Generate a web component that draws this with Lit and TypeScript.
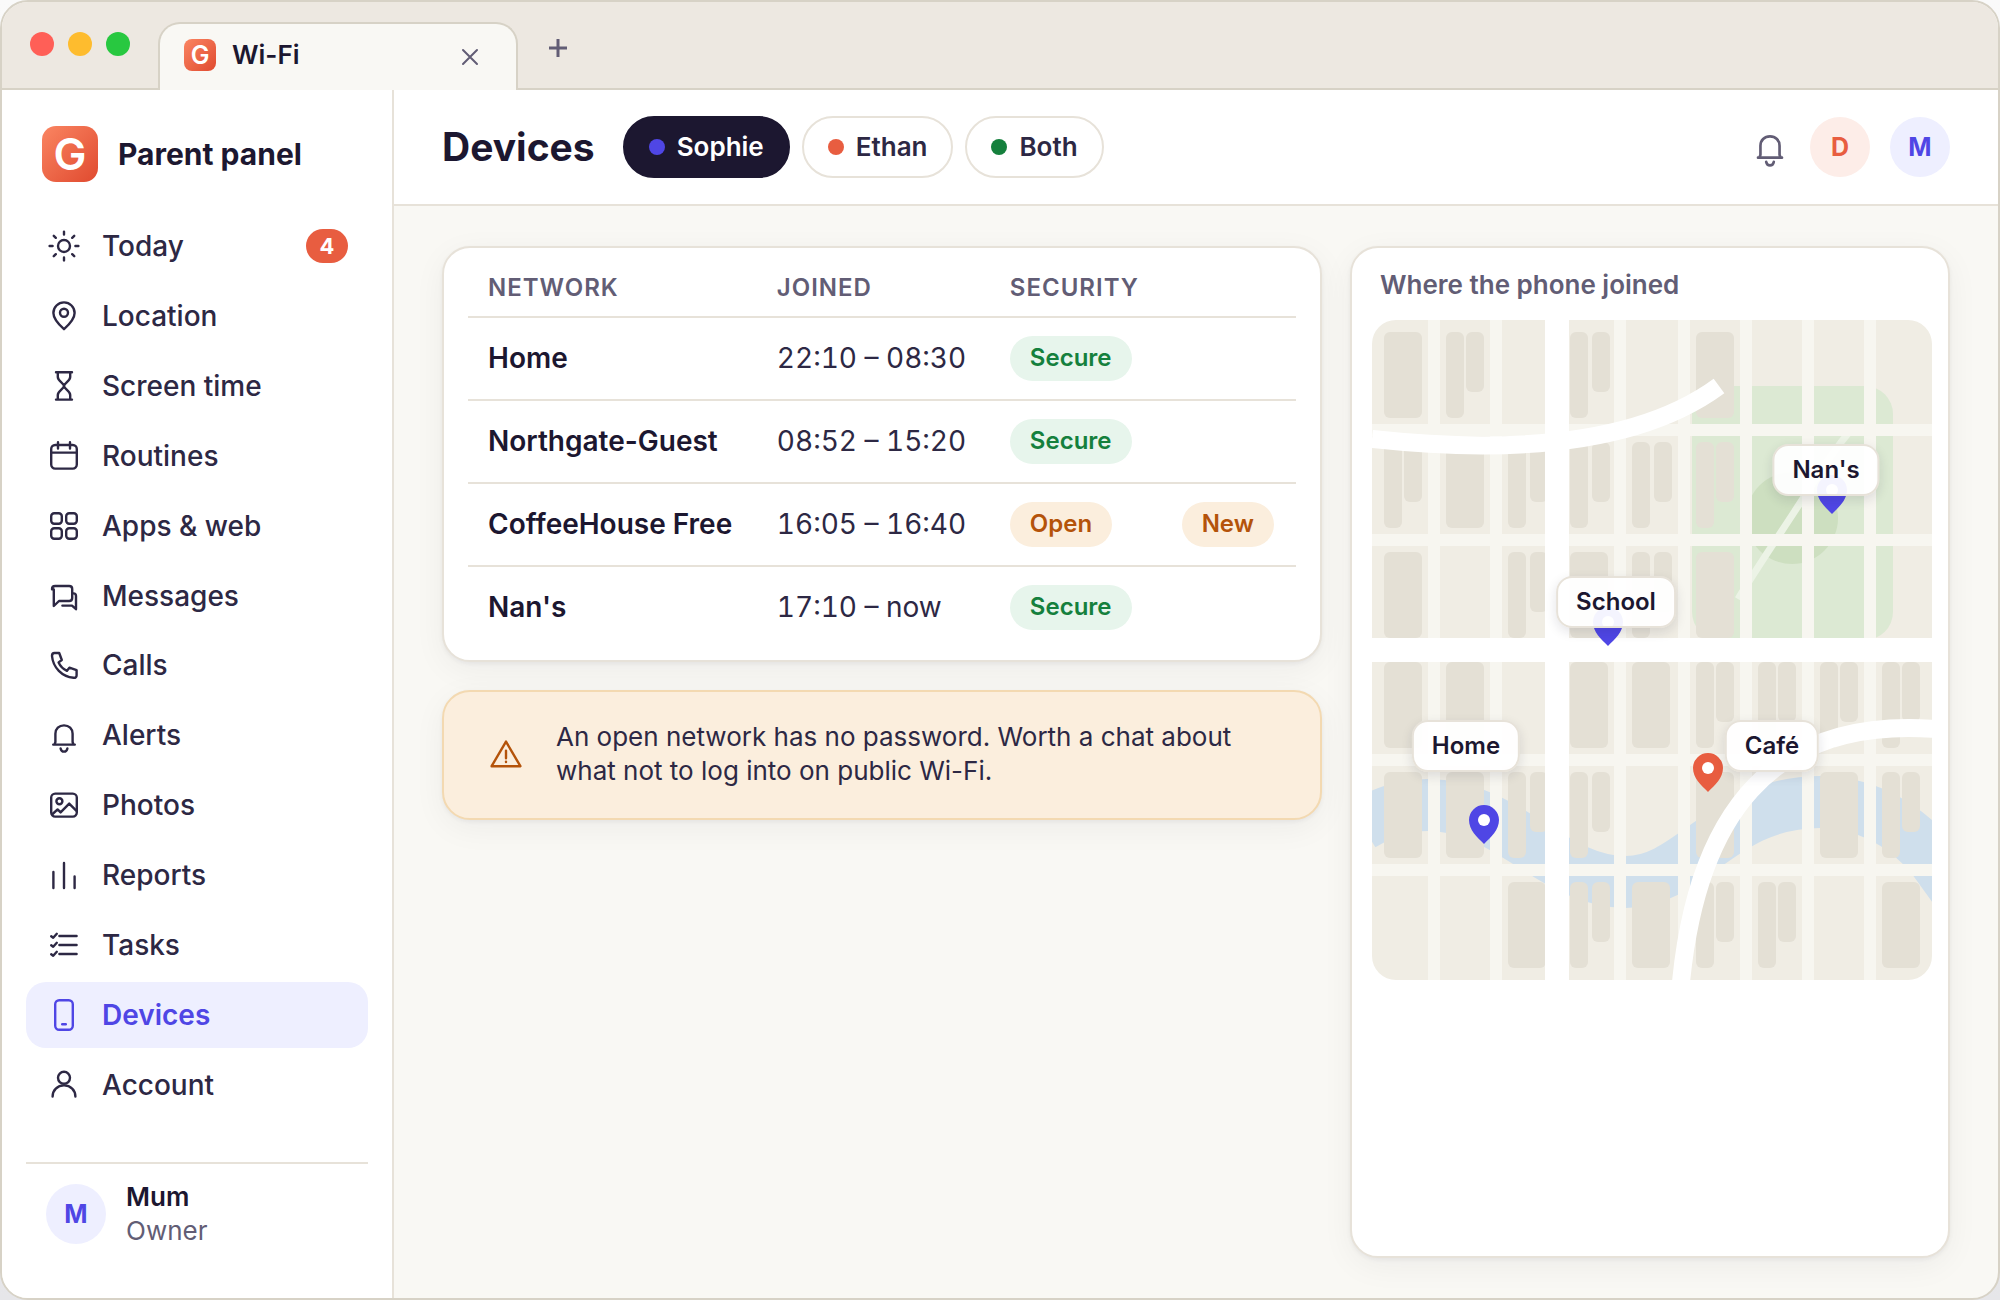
import { LitElement, html, css, svg, nothing, type TemplateResult } from "lit";
import { customElement } from "lit/decorators.js";
import { classMap } from "lit/directives/class-map.js";

const icons: Record<string, TemplateResult> = {
  sun: svg`<circle cx="18" cy="18" r="6"/><path d="M18 3.6v3M18 29.4v3M3.6 18h3M29.4 18h3M7.8 7.8l2 2M26.2 26.2l2 2M7.8 28.2l2-2M26.2 9.8l2-2"/>`,
  pin: svg`<path d="M18 31.2c-6-5.400-10.600-10.600-10.600-16.200a10.600 10.600 0 0 1 21.200 0c0 5.600-4.600 10.800-10.600 16.200z"/><circle cx="18" cy="14.800" r="4"/>`,
  hourglass: svg`<path d="M10 4.200h16M10 31.600h16M11.800 4.200v4.800c0 4 6.200 6.200 6.200 9s-6.200 5-6.200 9v4.600M24.200 4.200v4.800c0 4-6.200 6.200-6.200 9s6.200 5 6.200 9v4.600"/>`,
  calendar: svg`<rect x="5.200" y="7" width="25.600" height="23.600" rx="4"/><path d="M5.200 14.600h25.600M12 4.200v6.400M24 4.200v6.400"/>`,
  grid: svg`<rect x="5.200" y="5.200" width="10.600" height="10.600" rx="3"/><rect x="20.200" y="5.200" width="10.600" height="10.600" rx="3"/><rect x="5.200" y="20.200" width="10.600" height="10.600" rx="3"/><rect x="20.200" y="20.200" width="10.600" height="10.600" rx="3"/>`,
  chat: svg`<path d="M6 11.200c0-2 1.400-3.200 3.200-3.200h14c1.800 0 3 1.200 3 3v9c0 1.800-1.200 3-3 3H13l-5.200 5V11.400"/><path d="M26.400 15.400h1c1.600 0 2.600 1 2.600 2.600v13.200l-4-3.600h-9.600"/>`,
  phone: svg`<path d="M8.400 6h4.800l2.600 7-3.200 2.400c1.800 4 4.200 6.400 8.400 8.400l2.400-3.200 7.200 2.600v5c0 1.800-1.200 2.800-3 2.600C16 29.600 7 20.600 6 9c0-1.800.8-3 2.400-3z"/>`,
  bell: svg`<path d="M7.200 27.600h21.600M8.600 27.400l.8-2.400v-8.200c0-5 3.600-8.400 8.600-8.400s8.600 3.400 8.600 8.400v8.200l.8 2.400M14.600 31.400c.4 2 1.600 3.200 3.400 3.200s3-1.200 3.400-3.200"/>`,
  photo: svg`<rect x="5.200" y="6.600" width="25.600" height="23" rx="4"/><circle cx="13.400" cy="14.200" r="3"/><path d="M6.600 27l5-4.600 3 3 8.600-8.800 7 7"/>`,
  bars: svg`<path d="M7.400 15v16M18 6v25M28.600 19.400v11.600"/>`,
  tasks: svg`<path d="M13.400 9h17.200M13.400 18h17.200M13.400 27h17.200M5.200 9.200l2 1.600 3.600-4M5.200 18.200l2 1.600 3.600-4M5.200 27.200l2 1.600 3.600-4"/>`,
  device: svg`<rect x="9.200" y="3.200" width="17.600" height="29.600" rx="4"/><path d="M16.200 27.200h3.600"/>`,
  user: svg`<circle cx="18" cy="10.800" r="6"/><path d="M6.600 29.600c0-6.600 4.800-11.200 11.400-11.200s11.400 4.600 11.400 11.200"/>`,
  warning: svg`<path d="M18 5.600L32.400 30.200H3.600zM18 14.600v7.600M18 25.600v.4"/>`,
};

const icon = (name: string) =>
  html`<svg class="icon" viewBox="0 0 36 36" aria-hidden="true">${icons[name]}</svg>`;

const NAV: { label: string; icon: string; badge?: number }[] = [
  { label: "Today", icon: "sun", badge: 4 },
  { label: "Location", icon: "pin" },
  { label: "Screen time", icon: "hourglass" },
  { label: "Routines", icon: "calendar" },
  { label: "Apps & web", icon: "grid" },
  { label: "Messages", icon: "chat" },
  { label: "Calls", icon: "phone" },
  { label: "Alerts", icon: "bell" },
  { label: "Photos", icon: "photo" },
  { label: "Reports", icon: "bars" },
  { label: "Tasks", icon: "tasks" },
  { label: "Devices", icon: "device" },
  { label: "Account", icon: "user" },
];

const NETWORKS = [
  { name: "Home", joined: "22:10 – 08:30", secure: true, fresh: false },
  { name: "Northgate-Guest", joined: "08:52 – 15:20", secure: true, fresh: false },
  { name: "CoffeeHouse Free", joined: "16:05 – 16:40", secure: false, fresh: true },
  { name: "Nan's", joined: "17:10 – now", secure: true, fresh: false },
];

const base = css`
  *, *::before, *::after { box-sizing: border-box; }
  .icon {
    display: block;
    flex: none;
    width: 36px;
    height: 36px;
    fill: none;
    stroke: currentColor;
    stroke-width: 2.4;
    stroke-linecap: round;
    stroke-linejoin: round;
  }
  .avatar {
    display: grid;
    place-items: center;
    flex: none;
    width: 60px;
    height: 60px;
    padding: 0;
    border: 0;
    border-radius: 50%;
    background: #eeefff;
    color: #4f46e5;
    font: 700 25px/34px "Inter", sans-serif;
  }
  .avatar.coral { background: #fdede8; color: #e85d40; }
`;

/* Map geometry, in a 560 x 660 plan of nine columns by six rows. */
const MAP_W = 560;
const MAP_H = 660;
const COLUMN_X = [12, 74, 136, 198, 260, 324, 386, 448, 510];
const SECOND_X = [20, 20, 22, 22, 22, 20, 20, 20, 20];
/* s = one large building, p = a pair, . = open ground */
const BLOCKS = ["sp.p.s...", "pspppp...", "s.psps...", "ss.sspppp", "sspp.s.sp", "..spspp.s"];
const PLACES = [
  { name: "Nan's", x: 454, y: 150, pinX: 460, pinY: 194, tone: "indigo" },
  { name: "School", x: 244, y: 282, pinX: 236, pinY: 326, tone: "indigo" },
  { name: "Home", x: 94, y: 426, pinX: 112, pinY: 524, tone: "indigo" },
  { name: "Café", x: 400, y: 426, pinX: 336, pinY: 472, tone: "coral" },
];

@customElement("join-map")
export class JoinMap extends LitElement {
  static styles = [base, css`
    :host {
      display: block;
      position: relative;
      overflow: hidden;
      border-radius: 24px;
      background: #f0ede4;
    }
    .plan { display: block; width: 100%; height: auto; }
    .park { fill: #dce9d3; }
    .grove { fill: #cddfc0; }
    .path { fill: none; stroke: #ecf3e6; stroke-width: 7; }
    .river { fill: none; stroke: #cfdfec; stroke-width: 52; }
    .building { fill: #e4e0d5; }
    .street { fill: none; stroke: #f7f6f0; stroke-width: 12; }
    .road { fill: none; stroke: #fff; stroke-width: 24; }
    .bend { fill: none; stroke: #fff; stroke-width: 18; }
    .indigo { fill: #4f46e5; }
    .coral { fill: #e85d40; }
    .hole { fill: #fff; }
    .label {
      position: absolute;
      transform: translate(-50%, -50%);
      padding: 8px 18px;
      border: 2px solid #e7e2d9;
      border-radius: 16px;
      background: rgba(255, 255, 255, 0.94);
      box-shadow: 0 4px 12px rgba(28, 23, 48, 0.12);
      color: #1c1730;
      font: 600 24px/32px "Inter", sans-serif;
      white-space: nowrap;
    }
  `];

  private block(kind: string, col: number, row: number) {
    const x = COLUMN_X[col];
    const y = row * 110 + 12;
    if (kind === "s") return svg`<rect class="building" x=${x} y=${y} width="38" height="86" rx="6"/>`;
    if (kind === "p")
      return svg`<rect class="building" x=${x} y=${y} width="18" height="86" rx="6"/>
        <rect class="building" x=${x + SECOND_X[col]} y=${y} width="18" height="60" rx="6"/>`;
    return nothing;
  }

  render() {
    return html`
      <svg class="plan" viewBox="0 0 560 660" role="img" aria-label="Map of joined networks">
        <rect class="park" x="320" y="66" width="201" height="254" rx="28"/>
        <circle class="grove" cx="420" cy="198" r="46"/>
        <path class="path" d="M366 279C388 243 412 208 432 177S462 130 482 106"/>
        <path class="river" d="M-10 505C10 493 30 485 56 485C136 485 180 562 254 562C320 562 350 482 448 482C488 482 530 500 562 540L585 572"/>
        ${BLOCKS.map((line, row) => [...line].map((kind, col) => this.block(kind, col, row)))}
        <path class="street" d="M62 0V660M124 0V660M248 0V660M312 0V660M374 0V660M436 0V660M498 0V660M0 110H560M0 220H560M0 440H560M0 550H560"/>
        <path class="bend" d="M0 119C120 132 260 130 347 66M309 662C325 500 395 396 564 409"/>
        <path class="road" d="M185 0V660M0 330H560"/>
        ${PLACES.map((p) => svg`
          <g transform="translate(${p.pinX - 15} ${p.pinY - 39})">
            <path class=${p.tone} d="M15 0A15 15 0 0 0 0 15C0 25 8 32 15 39C22 32 30 25 30 15A15 15 0 0 0 15 0z"/>
            <circle class="hole" cx="15" cy="15" r="6"/>
          </g>`)}
      </svg>
      ${PLACES.map((p) => html`<span class="label" style="left:${(p.x / MAP_W) * 100}%;top:${(p.y / MAP_H) * 100}%">${p.name}</span>`)}
    `;
  }
}

@customElement("network-table")
export class NetworkTable extends LitElement {
  static styles = [base, css`
    :host { display: block; }
    table { width: 100%; border-collapse: separate; border-spacing: 0; text-align: left; }
    th, td { padding: 18px 20px; border-bottom: 2px solid #e7e2d9; font-size: 28px; line-height: 34px; white-space: nowrap; }
    thead th { padding: 12px 20px; color: #625d75; font-size: 24px; line-height: 32px; font-weight: 600; letter-spacing: 1px; text-transform: uppercase; }
    tbody tr:last-child > * { border-bottom: 0; }
    tbody th, tbody .joined { padding: 17px 20px 19px; }
    tbody th { color: #1c1730; font-weight: 600; }
    .joined { color: #2d2844; font-variant-numeric: tabular-nums; }
    .pill {
      display: block;
      width: fit-content;
      padding: 6px 20px 7px;
      border-radius: 23px;
      background: #fbeedd;
      color: #b4530a;
      font-size: 24px;
      line-height: 32px;
      font-weight: 600;
    }
    .pill.ok { background: #e7f5ec; color: #15803d; }
  `];

  render() {
    return html`<table>
      <thead><tr><th scope="col">Network</th><th scope="col">Joined</th><th scope="col">Security</th><th></th></tr></thead>
      <tbody>
        ${NETWORKS.map((n) => html`<tr>
          <th scope="row">${n.name}</th>
          <td class="joined">${n.joined}</td>
          <td><span class=${classMap({ pill: true, ok: n.secure })}>${n.secure ? "Secure" : "Open"}</span></td>
          <td>${n.fresh ? html`<span class="pill">New</span>` : nothing}</td>
        </tr>`)}
      </tbody>
    </table>`;
  }
}

@customElement("side-bar")
export class SideBar extends LitElement {
  static styles = [base, css`
    :host {
      display: flex;
      flex-direction: column;
      width: 392px;
      padding: 36px 24px;
      border-right: 2px solid #e7e2d9;
      background: #fff;
    }
    .brand { display: flex; align-items: center; gap: 20px; padding: 0 16px; margin-bottom: 32px; color: #1c1730; font: 700 30px/40px "Inter", sans-serif; }
    nav { display: flex; flex-direction: column; flex: 1; gap: 4px; margin-bottom: 44px; }
    .item {
      display: flex;
      align-items: center;
      flex: 1;
      gap: 20px;
      padding: 0 20px 1px;
      border-radius: 20px;
      color: #2d2844;
      font-size: 28px;
      line-height: 34px;
      font-weight: 500;
      text-decoration: none;
    }
    .item.current { background: #eeefff; color: #4f46e5; font-weight: 600; }
    .text { flex: 1; }
    .badge { min-width: 42px; padding: 0 12px; border-radius: 17px; background: #e85d40; color: #fff; font-size: 22px; line-height: 34px; font-weight: 700; text-align: center; }
    .owner { display: flex; align-items: center; gap: 20px; padding: 16px 20px 14px; border-top: 2px solid #e7e2d9; font-size: 26px; line-height: 34px; }
    .name { color: #1c1730; font-weight: 600; }
    .role { color: #625d75; }
  `];

  render() {
    return html`
      <div class="brand"><brand-mark></brand-mark><span>Parent panel</span></div>
      <nav aria-label="Main">
        ${NAV.map((n) => html`<a href="#" class=${classMap({ item: true, current: n.label === "Devices" })}>
          ${icon(n.icon)}<span class="text">${n.label}</span>
          ${n.badge ? html`<span class="badge">${n.badge}</span>` : nothing}
        </a>`)}
      </nav>
      <div class="owner">
        <span class="avatar">M</span>
        <div><div class="name">Mum</div><div class="role">Owner</div></div>
      </div>`;
  }
}

@customElement("brand-mark")
export class BrandMark extends LitElement {
  static styles = css`
    :host { display: grid; place-items: center; flex: none; width: 56px; height: 56px; border-radius: 14px; background: linear-gradient(135deg, #fa8562, #e04a2f); color: #fff; font: 600 44px/56px "Inter", sans-serif; }
    :host([small]) { width: 32px; height: 32px; border-radius: 8px; font-size: 25px; line-height: 32px; }
  `;
  render() {
    return html`<span>G</span>`;
  }
}

@customElement("app-root")
export class AppRoot extends LitElement {
  static styles = [base, css`
    :host { display: block; background: linear-gradient(#fafafa, #e6e6e9); font-family: "Inter", sans-serif; }
    .window {
      display: grid;
      grid-template-rows: auto 1fr;
      min-height: 100vh;
      overflow: hidden;
      border: 2px solid #d7d2c6;
      border-radius: 28px;
      background: #f9f8f4;
    }
    .chrome { display: flex; align-items: flex-end; height: 88px; padding: 0 28px; border-bottom: 2px solid #d7d2c6; background: #ede8e1; }
    .lights { display: flex; gap: 14px; margin: 0 28px 32px 0; }
    .light { width: 24px; height: 24px; border-radius: 50%; }
    .red { background: #ff5f57; }
    .amber { background: #febc2e; }
    .green { background: #28c840; }
    .tab {
      display: flex;
      align-items: center;
      gap: 16px;
      width: 360px;
      height: 68px;
      margin-bottom: -2px;
      padding: 0 24px 4px;
      border: 2px solid #d7d2c6;
      border-bottom: 0;
      border-radius: 22px 22px 0 0;
      background: #f9f8f4;
      color: #1c1730;
      font-size: 26px;
      line-height: 34px;
      font-weight: 600;
    }
    .title { flex: 1; }
    .tool { display: grid; place-items: center; width: 44px; height: 44px; padding: 0; border: 0; background: none; color: #625d75; }
    .tab .tool { padding-top: 4px; }
    .add { margin: 0 0 18px 18px; }
    .glyph { display: block; width: 18px; height: 18px; fill: none; stroke: currentColor; stroke-width: 2; stroke-linecap: round; }
    .add .glyph { stroke-width: 3; stroke-linecap: butt; }
    .body { display: grid; grid-template-columns: auto 1fr; }
    main { display: flex; flex-direction: column; min-width: 0; }
    header { display: flex; align-items: center; padding: 26px 48px; border-bottom: 2px solid #e7e2d9; background: #fff; }
    h1 { margin: 0 28px 0 0; color: #1c1730; font: 700 39px/52px "Inter", sans-serif; }
    .filters { display: flex; flex: 1; gap: 12px; }
    .filter {
      display: flex;
      align-items: center;
      gap: 12px;
      padding: 12px 24px;
      border: 2px solid #e7e2d9;
      border-radius: 31px;
      background: #fff;
      color: #2d2844;
      font: 600 26px/34px "Inter", sans-serif;
    }
    .filter.on { border-color: #1c1730; background: #1c1730; color: #fff; }
    .dot { width: 16px; height: 16px; border-radius: 50%; background: #4f46e5; }
    .dot.coral { background: #e85d40; }
    .dot.leaf { background: #15803d; }
    .who { display: flex; align-items: center; gap: 20px; }
    .bell { padding: 0; border: 0; background: none; color: #625d75; }
    .bell .icon { width: 40px; height: 40px; }
    .content { display: grid; grid-template-columns: minmax(0, 1fr) 600px; flex: 1; gap: 28px; padding: 40px 48px; }
    .stack { display: flex; flex-direction: column; gap: 28px; }
    .card { border: 2px solid #e7e2d9; border-radius: 28px; background: #fff; box-shadow: 0 2px 4px rgba(28, 23, 48, 0.05), 0 8px 32px rgba(28, 23, 48, 0.05); }
    .networks { padding: 12px 24px; }
    .notice { display: flex; align-items: center; gap: 32px; padding: 28px 44px 30px; border-color: #f3d9b1; background: #fbeedd; color: #2d2844; font-size: 26px; line-height: 34px; }
    .notice .icon { color: #b4530a; }
    .notice p { margin: 0; }
    .places { padding: 20px 16px 20px 20px; }
    h2 { margin: 0 8px 18px; color: #625d75; font-size: 26px; line-height: 34px; font-weight: 600; }
  `];

  render() {
    return html`<div class="window">
      <div class="chrome">
        <div class="lights"><span class="light red"></span><span class="light amber"></span><span class="light green"></span></div>
        <div class="tab">
          <brand-mark small></brand-mark><span class="title">Wi-Fi</span>
          <button class="tool" aria-label="Close tab"><svg class="glyph" viewBox="0 0 18 18"><path d="M2 2l14 14M16 2L2 16"/></svg></button>
        </div>
        <button class="tool add" aria-label="New tab"><svg class="glyph" viewBox="0 0 18 18"><path d="M9 0v18M0 9h18"/></svg></button>
      </div>
      <div class="body">
        <side-bar></side-bar>
        <main>
          <header>
            <h1>Devices</h1>
            <div class="filters">
              <button class="filter on" aria-pressed="true"><span class="dot"></span>Sophie</button>
              <button class="filter" aria-pressed="false"><span class="dot coral"></span>Ethan</button>
              <button class="filter" aria-pressed="false"><span class="dot leaf"></span>Both</button>
            </div>
            <div class="who">
              <button class="bell" aria-label="Notifications">${icon("bell")}</button>
              <button class="avatar coral" aria-label="Dad">D</button>
              <button class="avatar" aria-label="Mum">M</button>
            </div>
          </header>
          <div class="content">
            <div class="stack">
              <section class="card networks"><network-table></network-table></section>
              <section class="card notice">${icon("warning")}<p>An open network has no password. Worth a chat about what not to log into on public Wi-Fi.</p></section>
            </div>
            <section class="card places"><h2>Where the phone joined</h2><join-map></join-map></section>
          </div>
        </main>
      </div>
    </div>`;
  }
}
